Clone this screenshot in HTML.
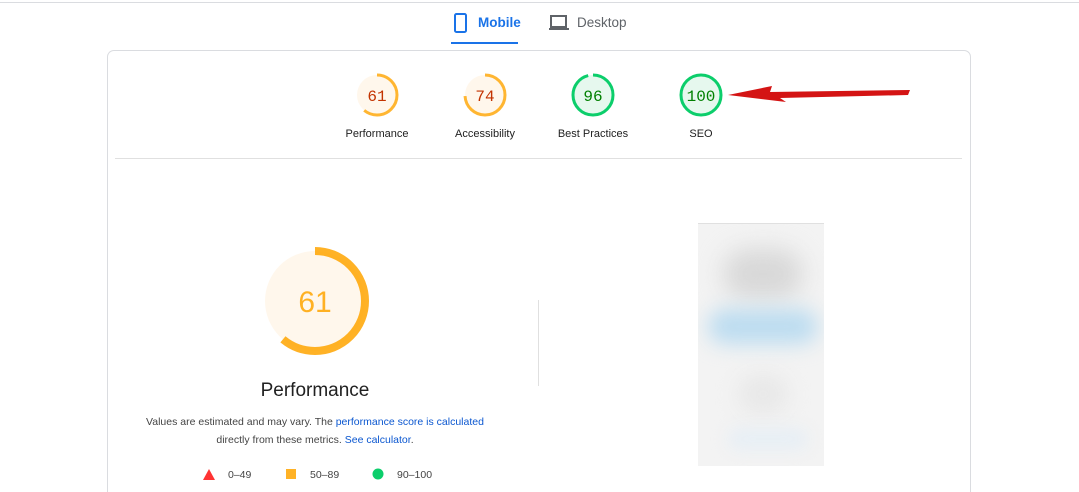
<!DOCTYPE html>
<html style="height:492px;overflow:hidden"><head><style>
body{margin:0;width:1079px;height:492px;background:#fff;font-family:"Liberation Sans",sans-serif;position:relative;overflow:hidden}
.a{position:absolute}
.lbl{position:absolute;font-size:11px;color:#212121;text-align:center;width:120px}
</style></head><body>
<div class="a" style="left:0;top:2px;width:1079px;height:1px;background:#dadce0"></div>
<svg class="a" style="left:452px;top:12px" width="18" height="22" viewBox="0 0 18 22"><rect x="3" y="2" width="11" height="18" rx="1.5" fill="none" stroke="#1a73e8" stroke-width="2"/></svg>
<div class="a" style="left:478px;top:15px;font-size:13.5px;color:#1a73e8;font-weight:bold">Mobile</div>
<div class="a" style="left:451px;top:42px;width:67px;height:2px;background:#1a73e8"></div>
<svg class="a" style="left:548px;top:14px" width="22" height="18" viewBox="0 0 22 18"><rect x="3" y="2" width="15" height="11" fill="none" stroke="#5f6368" stroke-width="2"/><rect x="1" y="14" width="20" height="2" fill="#5f6368"/></svg>
<div class="a" style="left:577px;top:15px;font-size:13.5px;color:#5f6368">Desktop</div>
<div class="a" style="left:107px;top:50px;width:862px;height:441px;border:1px solid #dadce0;border-bottom:none;border-radius:7px 7px 0 0"></div>
<div class="a" style="left:115px;top:158px;width:847px;height:1px;background:#e0e0e0"></div>
<svg class="a" style="left:0;top:0" width="1079" height="492">
<g font-family="Liberation Mono,monospace" font-size="16" text-anchor="middle">
<circle cx="377" cy="95" r="20" fill="#fff7ec"/>
<circle cx="377" cy="95" r="20" fill="none" stroke="#ffa400" stroke-opacity=".8" stroke-width="3" stroke-dasharray="76.6 200" transform="rotate(-90 377 95)"/>
<text x="377" y="101" fill="#c33300">61</text>
<circle cx="485" cy="95" r="20" fill="#fff7ec"/>
<circle cx="485" cy="95" r="20" fill="none" stroke="#ffa400" stroke-opacity=".8" stroke-width="3" stroke-dasharray="93 200" transform="rotate(-90 485 95)"/>
<text x="485" y="101" fill="#c33300">74</text>
<circle cx="593" cy="95" r="20" fill="#e6f8ee"/>
<circle cx="593" cy="95" r="20" fill="none" stroke="#0cce6b" stroke-width="3" stroke-dasharray="120.6 200" transform="rotate(-90 593 95)"/>
<text x="593" y="101" fill="#008000">96</text>
<circle cx="701" cy="95" r="20" fill="#e6f8ee" stroke="#0cce6b" stroke-width="3"/>
<text x="701" y="101" fill="#008000">100</text>
</g>
<polygon points="728,95 772,86 770,92 910,90 908,95 780,98 786,102" fill="#d41414"/>
<circle cx="315" cy="301" r="50" fill="#fff7ec"/>
<circle cx="315" cy="301" r="50" fill="none" stroke="#ffa400" stroke-opacity=".85" stroke-width="8" stroke-dasharray="191.6 400" transform="rotate(-90 315 301)"/>
<text x="315" y="312" text-anchor="middle" font-family="Liberation Sans,sans-serif" font-size="30" fill="#ffa400" fill-opacity=".85">61</text>
<polygon points="209,469 215,480 203,480" fill="#ff3333"/>
<rect x="286" y="469" width="10" height="10" fill="#ffa400" fill-opacity=".85"/>
<circle cx="378" cy="474" r="5.5" fill="#0cce6b"/>
<g font-size="10.5" fill="#444" font-family="Liberation Sans,sans-serif"><text x="228" y="478">0–49</text><text x="310" y="478">50–89</text><text x="397" y="478">90–100</text></g>
</svg>
<div class="lbl" style="left:317px;top:128px">Performance</div>
<div class="lbl" style="left:425px;top:128px">Accessibility</div>
<div class="lbl" style="left:533px;top:128px">Best Practices</div>
<div class="lbl" style="left:641px;top:128px">SEO</div>
<div class="a" style="left:215px;top:380px;width:200px;text-align:center;font-size:19px;color:#212121">Performance</div>
<div class="a" style="left:130px;top:413px;width:370px;text-align:center;font-size:10.5px;line-height:18px;color:#444">Values are estimated and may vary. The <span style="color:#0b57d0">performance score is calculated</span><br>directly from these metrics. <span style="color:#0b57d0">See calculator</span>.</div>
<div class="a" style="left:538px;top:300px;width:1px;height:86px;background:#e0e0e0"></div>
<div class="a" style="left:698px;top:223px;width:126px;height:242px;background:#f3f3f3;border-top:1px solid #e0e0e0;overflow:hidden">
<div class="a" style="left:25px;top:25px;width:80px;height:50px;background:#d8d8d8;border-radius:40px;filter:blur(12px)"></div>
<div class="a" style="left:10px;top:85px;width:110px;height:35px;background:#bcdcf0;border-radius:30px;filter:blur(10px)"></div>
<div class="a" style="left:40px;top:150px;width:50px;height:40px;background:#e8e8e8;border-radius:30px;filter:blur(10px)"></div>
<div class="a" style="left:30px;top:205px;width:80px;height:20px;background:#e6eef5;border-radius:30px;filter:blur(8px)"></div>
</div>
</body></html>
